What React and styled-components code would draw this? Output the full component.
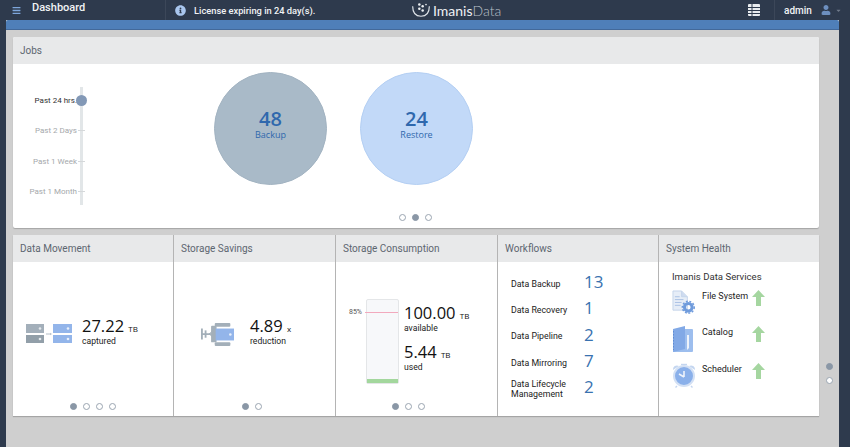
import React from 'react';
import styled, { createGlobalStyle } from 'styled-components';
import { FaInfoCircle, FaUser, FaCaretDown, FaBars } from 'react-icons/fa';

const GlobalStyle = createGlobalStyle`
  html, body {
    margin: 0;
    padding: 0;
    height: 100%;
    overflow: hidden;
    background: #2e3a4d;
    font-family: Roboto, "Open Sans", sans-serif;
  }
`;

const ServersIcon = () => (
  <svg width="46" height="20" viewBox="0 0 46 20">
    <rect x="0" y="0" width="18" height="9" fill="#a3afba" />
    <rect x="0" y="11" width="18" height="8" fill="#929fa9" />
    <circle cx="14" cy="4.5" r="1.3" fill="#e3e8ec" />
    <circle cx="14" cy="15" r="1.3" fill="#e3e8ec" />
    <path d="M20 10h4" stroke="#b4bec7" strokeWidth="1" />
    <path d="M24 8.7l2 1.3-2 1.3z" fill="#b4bec7" />
    <rect x="27" y="0" width="19" height="9" fill="#93b5ea" />
    <rect x="27" y="11" width="19" height="8" fill="#93b5ea" />
    <circle cx="42" cy="4.5" r="1.3" fill="#e8f0fb" />
    <circle cx="42" cy="15" r="1.3" fill="#e8f0fb" />
  </svg>
);

const ReductionIcon = () => (
  <svg width="33" height="23" viewBox="0 0 36 25">
    <path d="M1 6v12M1 12h9" stroke="#a3afb9" strokeWidth="2" fill="none" />
    <path d="M5 8v8" stroke="#a3afb9" strokeWidth="2" />
    <path d="M9 12l6-6M9 12l6-2M9 12l6 2M9 12l6 5" stroke="#a3afb9" strokeWidth="1" />
    <rect x="15" y="0" width="17" height="4" rx="1" fill="#a3afb9" />
    <rect x="11" y="3" width="6" height="18" rx="1" fill="#a3afb9" />
    <rect x="15" y="21" width="17" height="4" rx="1" fill="#a3afb9" />
    <rect x="16" y="6" width="20" height="13" fill="#93b5ea" />
    <circle cx="32" cy="12.5" r="1.4" fill="#e8f0fb" />
  </svg>
);

const FilesIcon = () => (
  <svg width="23" height="24" viewBox="0 0 24 25">
    <path d="M1 1h9l6 6v14H1z" fill="#e6edf7" stroke="#c4d4ea" strokeWidth="1" />
    <path d="M10 1v6h6" fill="#cfdcf0" stroke="#c4d4ea" strokeWidth="1" />
    <path d="M3 7h5M3 10h9M3 13h7M3 16h6" stroke="#a8c0e4" strokeWidth="1" />
    <circle cx="17" cy="18" r="4" fill="none" stroke="#6f9bdc" strokeWidth="3.2" />
    <circle cx="17" cy="18" r="6.2" fill="none" stroke="#6f9bdc" strokeWidth="1.6" strokeDasharray="2 1.7" />
  </svg>
);

const BookIcon = () => (
  <svg width="22" height="27" viewBox="0 0 22 27">
    <rect x="1" y="3" width="20" height="23" rx="1" fill="#9dbeee" />
    <path d="M1 3l12-3v23L1 26z" fill="#82a9e6" />
    <path d="M15 9h2v13l-2 2z" fill="#eef3fb" />
    <path d="M1.5 5v19" stroke="#5f8ad0" strokeWidth="1" strokeDasharray="1.5 1.5" />
  </svg>
);

const ClockIcon = () => (
  <svg width="24" height="25" viewBox="0 0 24 25">
    <path d="M1 7a4 4 0 0 1 6-4zM23 7a4 4 0 0 0-6-4z" fill="#c4d6f0" />
    <path d="M9 1.5h6" stroke="#c4d6f0" strokeWidth="1.4" />
    <circle cx="12" cy="13" r="10" fill="#8ab0ea" stroke="#d3e0f4" strokeWidth="2" />
    <path d="M12 14V8M12 14l-5-3" stroke="#eef3fb" strokeWidth="1.6" fill="none" />
    <path d="M5 23l-1.5 1.5M19 23l1.5 1.5" stroke="#c4d6f0" strokeWidth="1.4" />
  </svg>
);

const LogoMark = () => (
  <svg width="20" height="16" viewBox="0 0 24 17">
    <path d="M2 4c0 9 5 12 10 12s10-3 10-12" fill="none" stroke="#dfe3e8" strokeWidth="1.4" />
    <circle cx="10" cy="2" r="1.5" fill="#eef1f4" />
    <circle cx="14" cy="4" r="1.5" fill="#eef1f4" />
    <circle cx="10" cy="7" r="1.5" fill="#eef1f4" />
    <circle cx="14" cy="9" r="1.5" fill="#eef1f4" />
    <circle cx="18" cy="2" r="1" fill="#eef1f4" />
  </svg>
);

const ListIcon = () => (
  <svg width="14" height="14" viewBox="0 0 14 14">
    <rect x="1" y="1" width="12" height="12" rx="1" fill="#e8ebef" />
    <path d="M1 4.5h12M1 7.5h12M1 10.5h12M5 1v12" stroke="#2e3a4d" strokeWidth="1" />
  </svg>
);

const UpArrow = () => (
  <svg width="13" height="16" viewBox="0 0 13 16">
    <path d="M6.5 0L13 7H9v9H4V7H0z" fill="#a5d6a0" />
  </svg>
);

const periods = [
  { label: 'Past 24 hrs.', active: true },
  { label: 'Past 2 Days' },
  { label: 'Past 1 Week' },
  { label: 'Past 1 Month' },
];

const workflows = [
  { name: 'Data Backup', count: 13 },
  { name: 'Data Recovery', count: 1 },
  { name: 'Data Pipeline', count: 2 },
  { name: 'Data Mirroring', count: 7 },
  { name: 'Data Lifecycle Management', count: 2 },
];

const services = [
  { name: 'File System', icon: <FilesIcon /> },
  { name: 'Catalog', icon: <BookIcon /> },
  { name: 'Scheduler', icon: <ClockIcon /> },
];

const Pager = ({ count, active, shift = 0 }) => (
  <Dots shift={shift}>
    {Array.from({ length: count }).map((_, i) => (
      <Dot key={i} active={i === active} />
    ))}
  </Dots>
);

const App = () => {
  return (
    <>
      <GlobalStyle />
      <TopBar>
        <MenuCell>
          <MenuIcon />
          <h1>Dashboard</h1>
        </MenuCell>
        <License>
          <InfoIcon />
          License expiring in 24 day(s).
        </License>
        <Logo>
          <LogoMark />
          <span>
            Imanis<em>Data</em>
          </span>
        </Logo>
        <TopRight>
          <ListCell>
            <ListIcon />
          </ListCell>
          <UserCell>
            admin
            <UserIcon />
            <Caret />
          </UserCell>
        </TopRight>
      </TopBar>
      <Frame>
        <BlueBar />
        <Content>
          <Main>
            <JobsCard>
              <CardTitle>Jobs</CardTitle>
              <JobsBody>
                <Slider>
                  <Track />
                  {periods.map((p) => (
                    <Period key={p.label} active={p.active}>
                      {p.label}
                      {p.active ? <Handle /> : <Tick />}
                    </Period>
                  ))}
                </Slider>
                <Circles>
                  <Circle tone="backup">
                    <b>48</b>
                    <span>Backup</span>
                  </Circle>
                  <Circle tone="restore">
                    <b>24</b>
                    <span>Restore</span>
                  </Circle>
                </Circles>
                <JobsPager>
                  <Pager count={3} active={1} />
                </JobsPager>
              </JobsBody>
            </JobsCard>
            <Row>
              <Tile>
                <CardTitle>Data Movement</CardTitle>
                <TileBody>
                  <Stat left={13} gap={10}>
                    <ServersIcon />
                    <div>
                      <Value>
                        27.22 <small>TB</small>
                      </Value>
                      <Caption>captured</Caption>
                    </div>
                  </Stat>
                  <Pager count={4} active={0} />
                </TileBody>
              </Tile>
              <Tile>
                <CardTitle>Storage Savings</CardTitle>
                <TileBody>
                  <Stat left={27} gap={16}>
                    <ReductionIcon />
                    <div>
                      <Value>
                        4.89 <small>x</small>
                      </Value>
                      <Caption>reduction</Caption>
                    </div>
                  </Stat>
                  <Pager count={2} active={0} shift={6} />
                </TileBody>
              </Tile>
              <Tile>
                <CardTitle>Storage Consumption</CardTitle>
                <TileBody>
                  <Usage>
                    <Gauge>
                      <Mark>85%</Mark>
                      <GaugeFill />
                    </Gauge>
                    <UsageText>
                      <Value>
                        100.00 <small>TB</small>
                      </Value>
                      <Caption>available</Caption>
                      <SecondValue>
                        5.44 <small>TB</small>
                      </SecondValue>
                      <Caption>used</Caption>
                    </UsageText>
                  </Usage>
                  <Pager count={3} active={0} shift={16} />
                </TileBody>
              </Tile>
              <Tile>
                <CardTitle>Workflows</CardTitle>
                <FlowList>
                  {workflows.map((w) => (
                    <FlowRow key={w.name}>
                      <FlowName>{w.name}</FlowName>
                      <FlowCount>{w.count}</FlowCount>
                    </FlowRow>
                  ))}
                </FlowList>
              </Tile>
              <Tile>
                <CardTitle>System Health</CardTitle>
                <Health>
                  <HealthTitle>Imanis Data Services</HealthTitle>
                  {services.map((s) => (
                    <Service key={s.name}>
                      <ServiceIcon>{s.icon}</ServiceIcon>
                      <ServiceName>{s.name}</ServiceName>
                      <UpArrow />
                    </Service>
                  ))}
                </Health>
              </Tile>
            </Row>
          </Main>
          <SidePager>
            <Dot active />
            <Dot />
          </SidePager>
        </Content>
      </Frame>
    </>
  );
};

export default App;

const TopBar = styled.header`
  display: flex;
  align-items: stretch;
  height: 20px;
  background: #2e3a4d;
  color: #f1f3f5;
`;

const MenuCell = styled.div`
  display: flex;
  align-items: center;
  width: 166px;
  padding-left: 12px;
  box-sizing: border-box;
  border-right: 1px solid #3c4759;

  h1 {
    margin: 0 0 0 11px;
    font-size: 11px;
    font-weight: 500;
    line-height: 14px;
    transform: translateY(-2px);
  }
`;

const MenuIcon = styled(FaBars)`
  width: 9px;
  height: 9px;
  color: #7ea6dc;
`;

const License = styled.div`
  display: flex;
  align-items: center;
  width: 245px;
  padding-left: 9px;
  box-sizing: border-box;
  font-size: 9.3px;
  font-weight: 500;
  white-space: nowrap;
`;

const InfoIcon = styled(FaInfoCircle)`
  width: 11px;
  height: 11px;
  margin-right: 8px;
  color: #a9c6ee;
`;

const Logo = styled.div`
  display: flex;
  align-items: center;
  gap: 2px;
  font-size: 14px;
  font-family: "Lato", sans-serif;
  color: #eef1f4;

  em {
    font-style: normal;
    font-weight: 300;
    color: #b9c0c9;
  }
`;

const TopRight = styled.div`
  display: flex;
  align-items: stretch;
  margin-left: auto;
`;

const ListCell = styled.div`
  display: flex;
  align-items: center;
  padding-right: 13px;
  border-right: 1px solid #3c4759;
`;

const UserCell = styled.div`
  display: flex;
  align-items: center;
  width: 75px;
  padding-left: 9px;
  box-sizing: border-box;
  font-size: 10px;
  font-weight: 500;
`;

const UserIcon = styled(FaUser)`
  width: 10px;
  height: 10px;
  margin-left: 9px;
  color: #6d8fbf;
`;

const Caret = styled(FaCaretDown)`
  width: 7px;
  height: 7px;
  margin-left: 4px;
  color: #6f7a8a;
`;

const Frame = styled.div`
  width: 833px;
  height: 427px;
  margin-left: 6px;
  display: flex;
  flex-direction: column;
  background: #cfcfcf;
`;

const BlueBar = styled.div`
  flex: none;
  height: 10px;
  background: #4f7fb9;
  border-bottom: 1px solid #43699a;
  border-radius: 2px 2px 0 0;
  box-sizing: border-box;
`;

const Content = styled.div`
  display: flex;
  padding: 7px 0 0 7px;
`;

const Main = styled.div`
  display: flex;
  flex-direction: column;
  gap: 7px;
  width: 806px;
`;

const JobsCard = styled.section`
  height: 191px;
  display: flex;
  flex-direction: column;
  background: #fff;
  border-radius: 2px;
  box-shadow: 0 1px 1px rgba(0, 0, 0, 0.2);
  overflow: hidden;
`;

const CardTitle = styled.h2`
  flex: none;
  height: 27px;
  margin: 0;
  padding-left: 7px;
  box-sizing: border-box;
  background: #e8e9ea;
  color: #5d6670;
  font-size: 10px;
  font-weight: 400;
  line-height: 27px;
  white-space: nowrap;
`;

const JobsBody = styled.div`
  flex: 1;
  display: flex;
  position: relative;
`;

const Slider = styled.div`
  position: relative;
  width: 71px;
  margin-top: 23px;
  height: 118px;
  display: flex;
  flex-direction: column;
  padding-top: 8px;
  box-sizing: border-box;
`;

const Track = styled.div`
  position: absolute;
  top: 0;
  bottom: 0;
  right: 1px;
  width: 3px;
  background: #e2e6e8;
`;

const Period = styled.div`
  position: relative;
  flex: none;
  height: 30.4px;
  padding-right: 7px;
  text-align: right;
  font-size: 8px;
  line-height: 11px;
  white-space: nowrap;
  color: ${(props) => (props.active ? '#333' : '#a5a8ab')};
`;

const Handle = styled.i`
  position: absolute;
  top: 0;
  right: -2.5px;
  width: 11px;
  height: 11px;
  border-radius: 50%;
  background: #8298b6;
`;

const Tick = styled.i`
  position: absolute;
  top: 5px;
  right: -1px;
  width: 7px;
  height: 1px;
  background: #d5d8da;
`;

const Circles = styled.div`
  display: flex;
  gap: 33px;
  margin: 8px 0 0 130px;
`;

const Circle = styled.div`
  width: 113px;
  height: 113px;
  display: flex;
  flex-direction: column;
  align-items: center;
  justify-content: center;
  border-radius: 50%;
  box-sizing: border-box;
  background: ${(props) => (props.tone === 'backup' ? '#a9bac8' : '#c2d9f8')};
  border: 1px solid ${(props) => (props.tone === 'backup' ? '#a2b3c1' : '#b4cff3')};
  color: #2f68ad;
  font-family: "Open Sans", sans-serif;

  b {
    font-size: 20px;
    font-weight: 600;
    line-height: 20px;
  }

  span {
    font-size: 9px;
    font-weight: 500;
    line-height: 12px;
    margin-bottom: 8px;
  }
`;

const Dots = styled.div`
  display: flex;
  justify-content: center;
  gap: 6px;
  padding-right: ${(props) => props.shift}px;
`;

const Dot = styled.i`
  display: block;
  width: 7px;
  height: 7px;
  box-sizing: border-box;
  border-radius: 50%;
  background: ${(props) => (props.active ? '#8a97a6' : '#fff')};
  border: 1px solid ${(props) => (props.active ? '#8a97a6' : '#9aa5b1')};
`;

const JobsPager = styled.div`
  position: absolute;
  left: 386px;
  top: 150px;
`;

const Row = styled.div`
  display: grid;
  grid-template-columns: 160px 161px 161px 160px 160px;
  gap: 1px;
  height: 181px;
  box-shadow: 0 1px 1px rgba(0, 0, 0, 0.2);
  background: #b4b4b4;
`;

const Tile = styled.section`
  display: flex;
  flex-direction: column;
  background: #fff;
  min-width: 0;
`;

const TileBody = styled.div`
  flex: 1;
  display: flex;
  flex-direction: column;
  justify-content: flex-end;
  padding-bottom: 6px;
`;

const Stat = styled.div`
  display: flex;
  align-items: center;
  gap: ${(props) => props.gap}px;
  flex: 1;
  padding-left: ${(props) => props.left}px;
  padding-bottom: 1px;

  svg {
    margin-top: 4px;
  }
`;

const Value = styled.div`
  color: #111;
  font-family: "Open Sans", sans-serif;
  font-size: 16.5px;
  line-height: 15px;
  white-space: nowrap;

  small {
    font-size: 8px;
  }
`;

const SecondValue = styled(Value)`
  margin-top: 11px;
`;

const Caption = styled.div`
  color: #222;
  font-size: 8.6px;
  line-height: 10px;
`;

const Usage = styled.div`
  flex: 1;
  display: flex;
  padding: 37px 0 0 30px;
  gap: 5px;
`;

const UsageText = styled.div`
  margin-top: 6px;
`;

const Gauge = styled.div`
  position: relative;
  width: 33px;
  height: 85px;
  display: flex;
  align-items: flex-end;
  box-sizing: border-box;
  background: #f7f8fa;
  border: 1px solid #e4e6e8;
  border-radius: 2px;
`;

const GaugeFill = styled.div`
  width: 100%;
  height: 4px;
  background: #a3d79d;
`;

const Mark = styled.span`
  position: absolute;
  top: 8px;
  left: -18px;
  right: 0;
  font-size: 7px;
  line-height: 9px;
  color: #555;

  &::after {
    content: '';
    position: absolute;
    left: 16px;
    right: 0;
    top: 4px;
    height: 1px;
    background: #f2a9bd;
  }
`;

const FlowList = styled.div`
  display: flex;
  flex-direction: column;
  padding: 7px 0 0 13px;
`;

const FlowRow = styled.div`
  display: flex;
  align-items: center;
  height: 26.3px;
`;

const FlowName = styled.div`
  width: 73px;
  margin-top: 3px;
  color: #222;
  font-size: 8.8px;
  line-height: 10px;
`;

const FlowCount = styled.div`
  color: #3a72b0;
  font-family: "Open Sans", sans-serif;
  font-size: 17px;
  line-height: 20px;
`;

const Health = styled.div`
  display: flex;
  flex-direction: column;
  padding: 9px 0 0 13px;
`;

const HealthTitle = styled.div`
  color: #333;
  font-size: 9.6px;
  line-height: 12px;
  margin-bottom: 7px;
`;

const Service = styled.div`
  display: flex;
  align-items: flex-start;
  height: 36.4px;
`;

const ServiceIcon = styled.div`
  width: 30px;
  height: 28px;
`;

const ServiceName = styled.div`
  width: 50px;
  color: #222;
  font-size: 9px;
  line-height: 12px;
  white-space: nowrap;
`;

const SidePager = styled.div`
  display: flex;
  flex-direction: column;
  gap: 7px;
  margin: 326px 0 0 7px;
`;
